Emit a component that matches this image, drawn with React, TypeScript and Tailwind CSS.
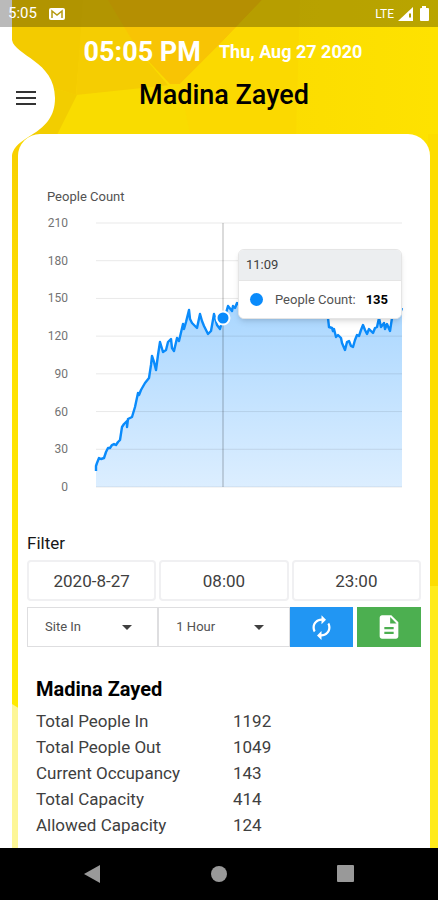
import React from "react";
import { MdAutorenew, MdDescription, MdArrowDropDown } from "react-icons/md";

const ticks = [210, 180, 150, 120, 90, 60, 30, 0];

const line =
  "0,248 0,243 1,240 3,235 5,236 8,235 10,229 12,225 14,225 16,222 18,221 20,222 22,219 24,217 26,204 28,201 31,198 31,204 32,196 36,194 39,184 42,170 43,172 45,167 49,160 53,155 55,142 56,133 58,139 60,147 62,132 64,119 67,129 70,127 72,119 75,116 76,125 78,128 81,115 83,118 87,101 88,106 90,99 93,87 94,96 96,100 99,103 101,105 104,91 106,98 108,103 112,111 115,108 118,91 121,102 124,106 127,95 130,90 132,83 136,88 137,83 139,85 141,80 146,84 151,75 158,81 165,70 174,78 182,68 192,75 201,69 212,78 221,73 227,82 231,88 232,95 233,104 236,105 237,108 238,106 240,114 242,112 245,115 246,120 249,127 251,119 253,118 255,123 257,124 259,117 261,112 263,113 265,107 267,102 269,107 271,111 273,106 275,108 277,110 279,105 281,104 283,95 285,104 288,100 289,106 291,101 294,108 296,95 299,91 303,93 306,85";

const stats = [
  { label: "Total People In", value: 1192 },
  { label: "Total People Out", value: 1049 },
  { label: "Current Occupancy", value: 143 },
  { label: "Total Capacity", value: 414 },
  { label: "Allowed Capacity", value: 124 },
];

const Background = () => (
  <svg
    className="absolute inset-0 h-full w-full"
    viewBox="0 0 438 900"
    preserveAspectRatio="none"
    aria-hidden="true"
  >
    <defs>
      <linearGradient id="sun" x1="0" y1="0" x2="1" y2="0">
        <stop offset="0" stopColor="#f8d800" />
        <stop offset="0.6" stopColor="#fbdc00" />
        <stop offset="1" stopColor="#fee200" />
      </linearGradient>
      <linearGradient id="edge" x1="0" y1="0" x2="0" y2="1">
        <stop offset="0" stopColor="#f8cf00" />
        <stop offset="0.4" stopColor="#ffe100" />
        <stop offset="1" stopColor="#ffea00" />
      </linearGradient>
    </defs>
    <rect width="438" height="900" fill="url(#sun)" />
    <polygon points="12,0 84,0 76,95 54,88 12,60" fill="#f3cb00" />
    <polygon points="83,0 109,0 138,50 172,90 76,96" fill="#f5cd02" />
    <polygon points="108,0 262,0 222,42 180,84 170,84 138,50" fill="#f8c404" />
    <polygon points="262,0 222,42 180,84 190,135 296,135 300,0" fill="#fbd900" />
    <polygon points="76,95 180,84 190,135 56,135" fill="#f9dc00" />
    <polygon points="54,88 77,95 57,135 30,135" fill="#f2cd00" />
    <rect x="12" y="134" width="8" height="574" fill="url(#edge)" />
    <polygon points="12,704 20,709 20,900 12,900" fill="#fdf696" />
    <rect x="428" y="134" width="10" height="454" fill="#fddd00" />
    <rect x="428" y="586" width="10" height="314" fill="#ffeb1a" />
  </svg>
);

const StatusBar = () => (
  <div className="relative z-10 flex h-[27px] items-center bg-black/27 px-2 text-[15px] text-white">
    <span>5:05</span>
    <svg className="ml-3 h-3 w-4" viewBox="0 0 16 12" aria-hidden="true">
      <rect width="16" height="12" rx="2" fill="#fff" />
      <path d="M3 10V3l5 4 5-4v7" fill="none" stroke="#b59a10" strokeWidth="1.5" />
    </svg>
    <span className="ml-auto text-xs">LTE</span>
    <svg className="ml-1 h-4 w-4" viewBox="0 0 16 16" aria-hidden="true">
      <path d="M0 15 15 1v14z" fill="#fff" />
      <path d="M11 7.500h2v4h-2z" fill="#aa9a00" />
    </svg>
    <svg className="ml-1 h-4 w-3" viewBox="0 0 12 16" aria-hidden="true">
      <path d="M4 0h4v2h2q1 0 1 1v11q0 1-1 1H3q-1 0-1-1V3q0-1 1-1h1z" fill="#fff" />
    </svg>
  </div>
);

const Chart = () => (
  <figure className="px-7">
    <figcaption className="pl-px text-[13px] leading-5 text-neutral-600">
      People Count
    </figcaption>
    <div className="mt-4 flex h-[264px]">
      <div className="-my-2 flex w-[22px] flex-col justify-between text-right text-xs leading-4 text-neutral-500">
        {ticks.map((tick) => (
          <span key={tick}>{tick}</span>
        ))}
      </div>
      <div className="relative ml-7 flex-1">
        <svg
          className="h-full w-full overflow-visible"
          viewBox="0 0 306 264"
          preserveAspectRatio="none"
          role="img"
          aria-label="People Count"
        >
          <defs>
            <linearGradient id="area" x1="0" y1="0" x2="0" y2="1">
              <stop offset="0" stopColor="#a6d5ff" />
              <stop offset="1" stopColor="#dceeff" />
            </linearGradient>
          </defs>
          <polygon points={`${line} 306,264 0,264`} fill="url(#area)" />
          {ticks.map((tick) => (
            <line
              key={tick}
              x1="0"
              x2="306"
              y1={((210 - tick) / 210) * 264}
              y2={((210 - tick) / 210) * 264}
              stroke="#000"
              strokeOpacity="0.09"
            />
          ))}
          <line x1="127" x2="127" y1="0" y2="264" stroke="#000" strokeOpacity="0.14" strokeWidth="2" />
          <polyline points={line} fill="none" stroke="#0a8bfb" strokeWidth="2.4" strokeLinejoin="round" />
          <ellipse cx="127" cy="95" rx="6.500" ry="6.500" fill="#0a8bfb" stroke="#fff" strokeWidth="2" />
        </svg>
        {/* Tooltip */}
        <div className="absolute right-0 top-[26px] w-[164px] overflow-hidden rounded-md border border-neutral-200 bg-white text-[13px] shadow-md">
          <div className="border-b border-neutral-200 bg-[#eceef0] px-[7px] leading-[30px] text-neutral-700">
            11:09
          </div>
          <div className="flex h-[37px] items-center bg-white pl-[11px] text-neutral-600">
            <span className="mr-3 h-[13px] w-[13px] rounded-full bg-[#0a8bfb]" />
            People Count:
            <b className="ml-[10px] text-black">135</b>
          </div>
        </div>
      </div>
    </div>
  </figure>
);

const DateBox = ({ label, value }: { label: string; value: string }) => (
  <input
    type="text"
    aria-label={label}
    defaultValue={value}
    className="h-[41px] w-full min-w-0 rounded-sm border-2 border-[#f0f0f2] bg-white text-center text-[17px] text-neutral-700"
  />
);

const Dropdown = ({ label, options }: { label: string; options: string[] }) => (
  <div className="relative">
    <select
      aria-label={label}
      className="h-10 w-full appearance-none border border-[#dedee0] bg-white pl-[17px] text-[13px] text-neutral-600"
    >
      {options.map((option) => (
        <option key={option}>{option}</option>
      ))}
    </select>
    <MdArrowDropDown className="pointer-events-none absolute right-[19px] top-2 text-2xl text-neutral-700" />
  </div>
);

const App = () => {
  return (
    <div className="relative flex min-h-screen flex-col overflow-hidden bg-white font-[Roboto,sans-serif]">
      <Background />
      {/* White edge with the bump behind the menu button */}
      <div className="absolute inset-y-0 left-0 w-3 bg-white" />
      <svg className="absolute left-0 top-0 h-40 w-14" viewBox="0 0 56 160" aria-hidden="true">
        <path d="M0 0H12V40C15 56 55 61 55 98C55 136 15 134 12 156V160H0z" fill="#fff" />
      </svg>
      <StatusBar />

      <header className="relative h-[107px]">
        <div className="flex items-center justify-center gap-[18px] pl-2 pt-[9px] font-bold text-white">
          <span className="text-[27px] leading-8">05:05 PM</span>
          <span className="text-lg leading-8">Thu, Aug 27 2020</span>
        </div>
        <h1 className="mt-[7px] pl-[10px] text-center text-[27px] font-medium leading-10 text-black">
          Madina Zayed
        </h1>
        <button type="button" aria-label="Menu" className="absolute left-4 top-16 flex flex-col gap-1">
          <span className="h-0.5 w-5 bg-[#333]" />
          <span className="h-0.5 w-5 bg-[#333]" />
          <span className="h-0.5 w-5 bg-[#333]" />
        </button>
      </header>

      <main className="relative ml-[18px] mr-2 flex-1 rounded-t-[22px] bg-white pt-[53px]">
        <Chart />

        {/* Filter */}
        <form className="mt-11 px-[9px]">
          <h2 className="text-[17px] leading-6 text-neutral-900">Filter</h2>
          <div className="mt-[5px] grid grid-cols-3 gap-[3px]">
            <DateBox label="Date" value="2020-8-27" />
            <DateBox label="From" value="08:00" />
            <DateBox label="To" value="23:00" />
          </div>
          <div className="mt-[6px] grid grid-cols-3">
            <Dropdown label="Site" options={["Site In"]} />
            <Dropdown label="Interval" options={["1 Hour"]} />
            <div className="flex gap-1">
              <button
                type="button"
                aria-label="Refresh"
                className="flex h-10 flex-1 items-center justify-center bg-[#2196f3] text-[27px] text-white"
              >
                <MdAutorenew />
              </button>
              <button
                type="button"
                aria-label="Report"
                className="flex h-10 flex-1 items-center justify-center bg-[#4caf50] text-[28px] text-white"
              >
                <MdDescription />
              </button>
            </div>
          </div>
        </form>

        {/* Summary */}
        <section className="px-[18px] pt-7">
          <h2 className="text-xl font-bold leading-7 text-black">Madina Zayed</h2>
          <table className="mt-[5px] w-full text-left text-[17px] leading-[26px] text-neutral-700">
            <tbody>
              {stats.map((row) => (
                <tr key={row.label}>
                  <th scope="row" className="w-[197px] p-0 font-normal">
                    {row.label}
                  </th>
                  <td className="p-0">{row.value}</td>
                </tr>
              ))}
            </tbody>
          </table>
        </section>
      </main>

      <nav className="relative flex h-[52px] items-center justify-around bg-black px-7">
        <button type="button" aria-label="Back">
          <svg className="h-5 w-5" viewBox="0 0 20 20">
            <path d="M2 10 18 1v18z" fill="#999" />
          </svg>
        </button>
        <button type="button" aria-label="Home">
          <svg className="h-5 w-5" viewBox="0 0 20 20">
            <circle cx="10" cy="10" r="8" fill="#999" />
          </svg>
        </button>
        <button type="button" aria-label="Recent apps">
          <svg className="h-5 w-5" viewBox="0 0 20 20">
            <rect x="1" y="1" width="17" height="17" rx="1" fill="#999" />
          </svg>
        </button>
      </nav>
    </div>
  );
};

export default App;
